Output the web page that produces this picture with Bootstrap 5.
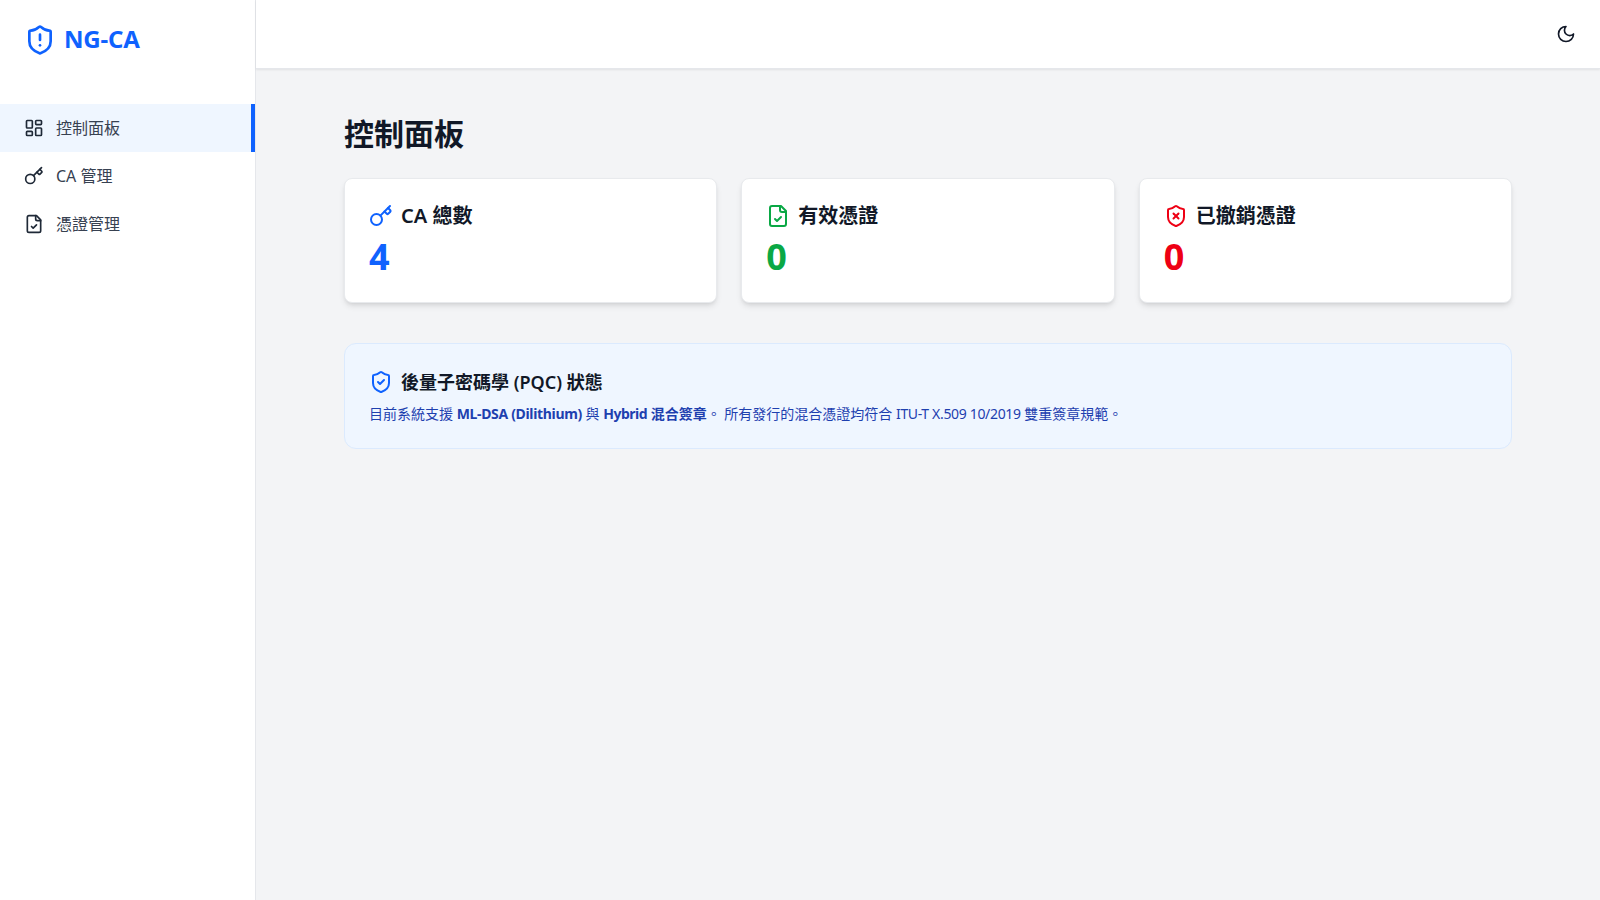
<!doctype html>
<html lang="zh-Hant">
<head>
<meta charset="utf-8">
<title>NG-CA</title>
<link href="https://cdn.jsdelivr.net/npm/bootstrap@5.3.0/dist/css/bootstrap.min.css" rel="stylesheet">
<style>
body{font-family:"Noto Sans","Noto Sans CJK TC",sans-serif;background:#f3f4f6;color:#111827;}
.ic{fill:none;stroke:currentColor;stroke-width:2;stroke-linecap:round;stroke-linejoin:round;flex:none;}
.shell{height:900px;overflow:hidden;}
.side{width:256px;background:#fff;border-right:1px solid #e5e7eb;flex:none;}
.brand{height:80px;padding:0 24px;color:#0f62fe;font-size:24px;font-weight:700;gap:8px;margin-bottom:24px;}
.brandname{padding-bottom:2px;letter-spacing:-.2px;}
.mitem{height:48px;padding:0 24px;gap:12px;color:#374151;text-decoration:none;font-size:16px;}
.mitem .ic{color:#1f2937;}
.mitem.on{background:#eff6ff;border-right:4px solid #0f62fe;color:#374151;}
.topbar{height:69px;background:#fff;border-bottom:1px solid #e5e7eb;box-shadow:0 1px 2px rgba(0,0,0,.08);padding:0 24px;color:#111827;}
.mainarea{padding:32px 88px;}
.pagetitle{font-size:30px;font-weight:700;line-height:36px;margin:15px 0 26px;}
.statgrid{display:grid;grid-template-columns:repeat(3,1fr);gap:24px;margin-bottom:40px;}
.statbox{background:#fff;border:1px solid #e8eaed;border-radius:8px;box-shadow:0 4px 6px -1px rgba(0,0,0,.1),0 2px 4px -2px rgba(0,0,0,.1);padding:23px 24px;height:125px;}
.stathead{font-size:20px;font-weight:600;line-height:28px;gap:8px;margin-bottom:7px;}
.statnum{font-size:36px;font-weight:700;line-height:40px;}
.c-blue{color:#0f62fe;}.c-green{color:#0aa845;}.c-red{color:#ee0014;}
.infobox{background:#eff6ff;border:1px solid #dbeafe;border-radius:12px;padding:24px;height:106px;}
.infohead{font-size:18px;font-weight:600;line-height:28px;gap:8px;margin-bottom:8px;}
.infotext{font-size:14px;line-height:20px;color:#1e40af;margin:0;}
.infotext strong{font-weight:700;}
.tight{letter-spacing:-.33px;}
.tighter{letter-spacing:-.5px;}
</style>
</head>
<body>
<div class="d-flex shell">
  <aside class="side">
    <div class="brand d-flex align-items-center">
      <svg class="ic" width="32" height="32" viewBox="0 0 24 24"><path d="M20 13c0 5-3.5 7.5-7.66 8.95a1 1 0 0 1-.67-.01C7.5 20.5 4 18 4 13V6a1 1 0 0 1 1-1c2 0 4.5-1.2 6.24-2.72a1.17 1.17 0 0 1 1.52 0C14.51 3.81 17 5 19 5a1 1 0 0 1 1 1z"/><path d="M12 8v4"/><path d="M12 16h.01"/></svg>
      <span class="brandname">NG-CA</span>
    </div>
    <nav class="d-flex flex-column">
      <a class="mitem on d-flex align-items-center" href="#"><svg class="ic" width="20" height="20" viewBox="0 0 24 24"><rect x="3" y="3" width="7" height="9" rx="1"/><rect x="14" y="3" width="7" height="5" rx="1"/><rect x="14" y="12" width="7" height="9" rx="1"/><rect x="3" y="16" width="7" height="5" rx="1"/></svg><span>控制面板</span></a>
      <a class="mitem d-flex align-items-center" href="#"><svg class="ic" width="20" height="20" viewBox="0 0 24 24"><path d="m15.5 7.5 2.3 2.3a1 1 0 0 0 1.4 0l2.1-2.1a1 1 0 0 0 0-1.4L19 4"/><path d="m21 2-9.6 9.6"/><circle cx="7.5" cy="15.5" r="5.5"/></svg><span>CA 管理</span></a>
      <a class="mitem d-flex align-items-center" href="#"><svg class="ic" width="20" height="20" viewBox="0 0 24 24"><path d="M15 2H6a2 2 0 0 0-2 2v16a2 2 0 0 0 2 2h12a2 2 0 0 0 2-2V7Z"/><path d="M14 2v4a2 2 0 0 0 2 2h4"/><path d="m9 15 2 2 4-4"/></svg><span>憑證管理</span></a>
    </nav>
  </aside>
  <div class="flex-grow-1 d-flex flex-column">
    <header class="topbar d-flex align-items-center justify-content-end">
      <svg class="ic" width="20" height="20" viewBox="0 0 24 24"><path d="M12 3a6 6 0 0 0 9 9 9 9 0 1 1-9-9Z"/></svg>
    </header>
    <main class="mainarea">
      <h1 class="pagetitle">控制面板</h1>
      <div class="statgrid">
        <div class="statbox">
          <div class="stathead d-flex align-items-center"><svg class="ic c-blue" width="24" height="24" viewBox="0 0 24 24"><path d="m15.5 7.5 2.3 2.3a1 1 0 0 0 1.4 0l2.1-2.1a1 1 0 0 0 0-1.4L19 4"/><path d="m21 2-9.6 9.6"/><circle cx="7.5" cy="15.5" r="5.5"/></svg><span>CA 總數</span></div>
          <div class="statnum c-blue">4</div>
        </div>
        <div class="statbox">
          <div class="stathead d-flex align-items-center"><svg class="ic c-green" width="24" height="24" viewBox="0 0 24 24"><path d="M15 2H6a2 2 0 0 0-2 2v16a2 2 0 0 0 2 2h12a2 2 0 0 0 2-2V7Z"/><path d="M14 2v4a2 2 0 0 0 2 2h4"/><path d="m9 15 2 2 4-4"/></svg><span>有效憑證</span></div>
          <div class="statnum c-green">0</div>
        </div>
        <div class="statbox">
          <div class="stathead d-flex align-items-center"><svg class="ic c-red" width="24" height="24" viewBox="0 0 24 24"><path d="M20 13c0 5-3.5 7.5-7.66 8.95a1 1 0 0 1-.67-.01C7.5 20.5 4 18 4 13V6a1 1 0 0 1 1-1c2 0 4.5-1.2 6.24-2.72a1.17 1.17 0 0 1 1.52 0C14.51 3.81 17 5 19 5a1 1 0 0 1 1 1z"/><path d="m14.5 9.5-5 5"/><path d="m9.5 9.5 5 5"/></svg><span>已撤銷憑證</span></div>
          <div class="statnum c-red">0</div>
        </div>
      </div>
      <section class="infobox">
        <div class="infohead d-flex align-items-center"><svg class="ic c-blue" width="24" height="24" viewBox="0 0 24 24"><path d="M20 13c0 5-3.5 7.5-7.66 8.95a1 1 0 0 1-.67-.01C7.5 20.5 4 18 4 13V6a1 1 0 0 1 1-1c2 0 4.5-1.2 6.24-2.72a1.17 1.17 0 0 1 1.52 0C14.51 3.81 17 5 19 5a1 1 0 0 1 1 1z"/><path d="m9 12 2 2 4-4"/></svg><span>後量子密碼學 (PQC) 狀態</span></div>
        <p class="infotext">目前系統支援 <strong class="tight">ML-DSA (Dilithium)</strong> 與 <strong><span class="tighter">Hybrid</span> 混合簽章</strong>。 所有發行的混合憑證均符合 <span class="tight">ITU-T X.509 10/2019</span> 雙重簽章規範。</p>
      </section>
    </main>
  </div>
</div>
<script src="https://cdn.jsdelivr.net/npm/bootstrap@5.3.0/dist/js/bootstrap.bundle.min.js"></script>
</body>
</html>
